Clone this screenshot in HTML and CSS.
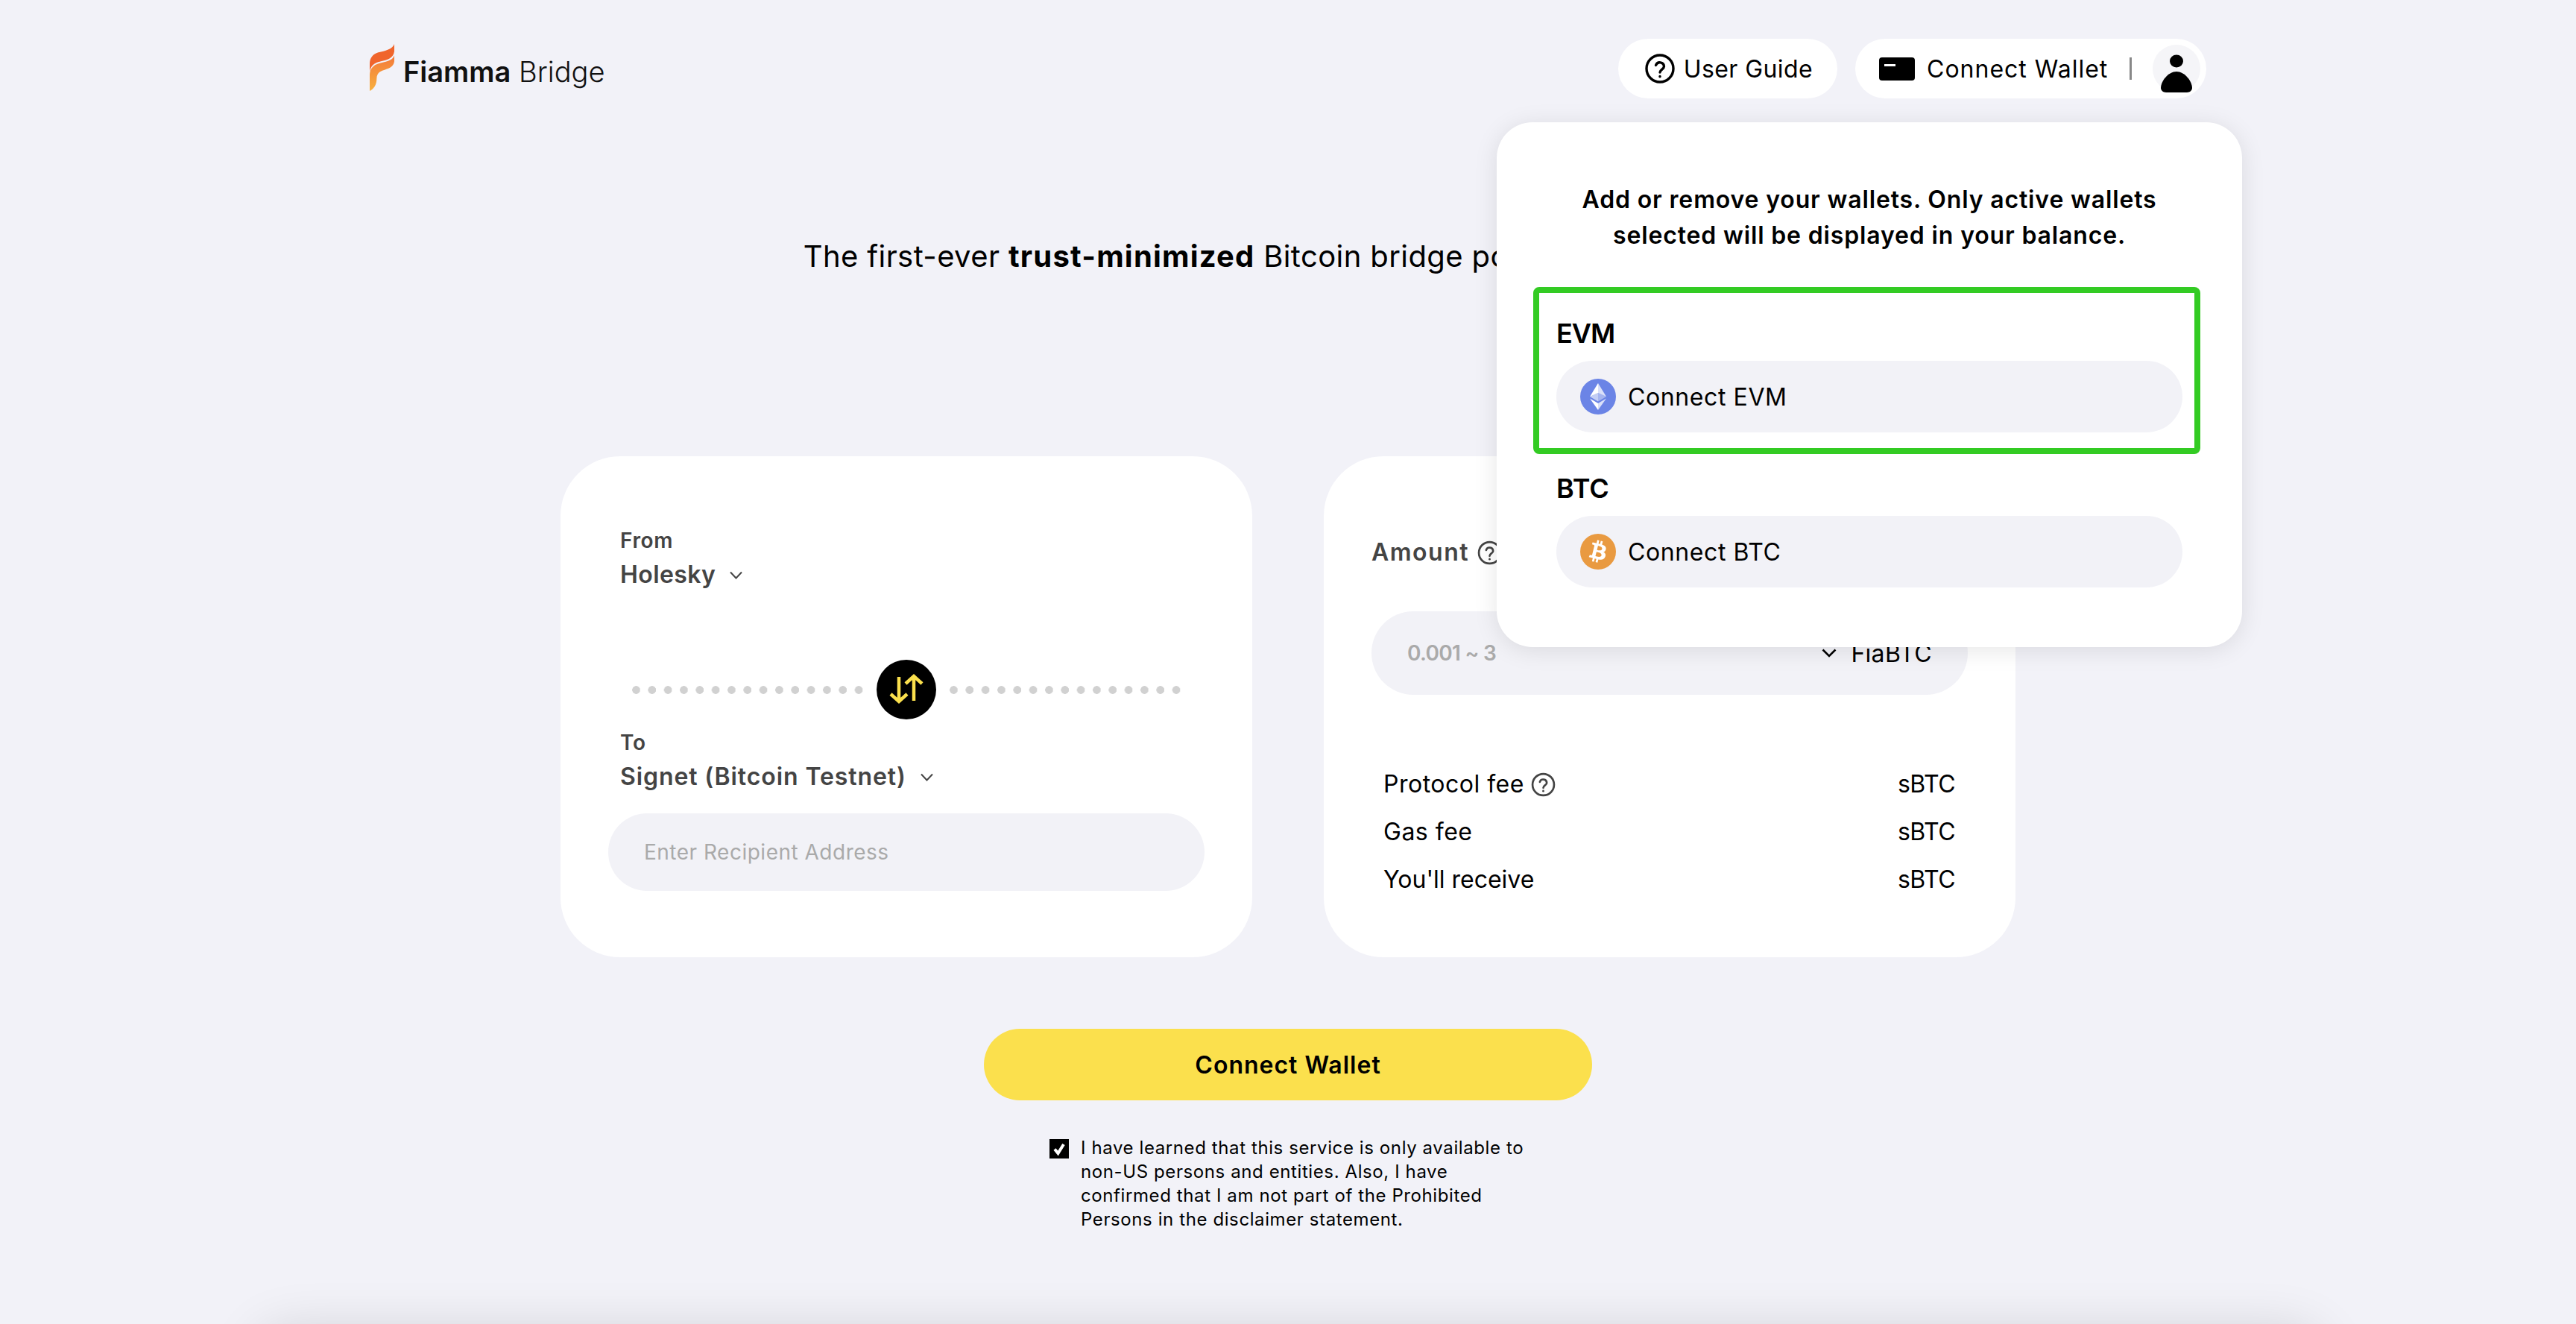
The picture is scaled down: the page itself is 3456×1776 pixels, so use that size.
FILE: index.html
```html
<!DOCTYPE html>
<html lang="en">
<head>
    <meta charset="UTF-8">
    <meta name="viewport" content="width=device-width, initial-scale=1.0">
    <title>Fiamma Bridge</title>
    <link rel="stylesheet" href="styles.css">
</head>
<body>
    <header class="top-bar">
        <a class="logo" href="#">
            <svg class="logo-flame" viewBox="0 0 99 189">
                <defs>
                    <linearGradient id="flameLow" x1="0" y1="0" x2="0" y2="1">
                        <stop offset="0" stop-color="#f3793a"/>
                        <stop offset="1" stop-color="#f8b03e"/>
                    </linearGradient>
                </defs>
                <path fill="#f0652c" d="M99 0C92 22 60 28 35 34C12 40 0 58 0 80V112C4 86 20 76 45 70C70 64 95 58 99 30Z"/>
                <path fill="url(#flameLow)" d="M99 46C92 70 60 72 38 78C15 84 0 100 0 125V189C15 182 28 165 28 140C28 118 40 110 60 104C80 98 97 90 99 70Z"/>
            </svg>
            <span class="logo-text"><b>Fiamma</b> Bridge</span>
        </a>
        <div class="top-actions">
            <a class="pill guide-pill" href="#">
                <svg class="guide-icon" viewBox="0 0 40 40" fill="none" stroke="#000" stroke-width="3.4" stroke-linecap="round">
                    <circle cx="20" cy="20" r="18"/>
                    <path d="M14.5 15.5a5.7 5.7 0 0 1 11 1.6c0 3.8-5.5 4.2-5.5 8"/>
                    <path d="M20 30.5v.2"/>
                </svg>
                User Guide
            </a>
            <div class="pill wallet-pill">
                <svg class="wallet-icon" viewBox="0 0 48 31">
                    <rect width="48" height="31" rx="4" fill="#000"/>
                    <rect x="7" y="9" width="15" height="3" fill="#fff"/>
                </svg>
                <span class="wallet-label">Connect Wallet</span>
                <span class="pill-sep"></span>
                <span class="avatar">
                    <svg viewBox="0 0 64 64" width="64" height="64" fill="#000">
                        <ellipse cx="32" cy="22" rx="9" ry="8.5"/>
                        <path d="M32 36C21 36 11 49 11 58C11 61 14 64 18 64H46C50 64 53 61 53 58C53 49 43 36 32 36Z"/>
                    </svg>
                </span>

                <div class="wallet-panel">
                    <p class="panel-intro">Add or remove your wallets. Only active wallets selected will be displayed in your balance.</p>

                    <h3 class="panel-title evm-title">EVM</h3>
                    <button class="connect-row" type="button">
                        <svg class="chain-icon" viewBox="0 0 48 48">
                            <circle cx="24" cy="24" r="24" fill="#6b84e6"/>
                            <path fill="#fff" fill-opacity=".75" d="M24 6V19L35 24Z"/>
                            <path fill="#fff" d="M24 6L13 24L24 19Z"/>
                            <path fill="#fff" fill-opacity=".75" d="M24 33V42L35 26.500Z"/>
                            <path fill="#fff" d="M24 33L13 26.500L24 42Z"/>
                            <path fill="#fff" fill-opacity=".4" d="M24 19V30.500L35 24Z"/>
                            <path fill="#fff" fill-opacity=".6" d="M13 24L24 19V30.500Z"/>
                        </svg>
                        Connect EVM
                    </button>

                    <h3 class="panel-title btc-title">BTC</h3>
                    <button class="connect-row" type="button">
                        <svg class="chain-icon" viewBox="0 0 24 24">
                            <circle cx="12" cy="12" r="12" fill="#e99a41"/>
                            <path fill="#fff" fill-rule="evenodd" d="M17.288 10.291c.24-1.59-.974-2.45-2.64-3.03l.54-2.153-1.315-.33-.525 2.107c-.345-.087-.705-.167-1.064-.25l.526-2.127-1.32-.33-.54 2.165c-.285-.067-.565-.132-.84-.2l-1.815-.45-.35 1.407s.975.225.955.236c.535.136.63.486.615.766l-1.477 5.92c-.075.166-.24.406-.614.314.015.02-.96-.24-.96-.24l-.66 1.51 1.71.426.93.242-.54 2.19 1.32.327.54-2.17c.36.1.705.19 1.05.273l-.51 2.154 1.32.33.545-2.19c2.24.427 3.93.257 4.64-1.774.57-1.637-.03-2.58-1.217-3.196.854-.193 1.5-.76 1.68-1.93h.01zM14.278 14.511c-.404 1.64-3.157.75-4.05.53l.72-2.9c.896.23 3.757.67 3.33 2.37zM14.688 10.271c-.37 1.49-2.662.735-3.405.55l.654-2.64c.744.18 3.137.524 2.75 2.084v.006z"/>
                        </svg>
                        Connect BTC
                    </button>

                    <div class="panel-highlight"></div>
                </div>
            </div>
        </div>
    </header>

    <main class="bridge">
        <h2 class="headline">The first-ever <b>trust-minimized</b> Bitcoin bridge powered by BitVM</h2>

        <div class="cards">
            <section class="card route-card">
                <div class="chain-label">From</div>
                <div class="chain-select">
                    Holesky
                    <svg class="chevron" viewBox="0 0 17 11" fill="none" stroke="#444" stroke-width="2"><path d="M1 1.500L8.500 9.500L16 1.500"/></svg>
                </div>

                <div class="swap-row">
                    <span class="dots"></span>
                    <button class="swap-btn" type="button">
                        <svg viewBox="0 0 80 80" width="80" height="80" fill="none" stroke="#fbe04d" stroke-width="4.500">
                            <path d="M30 23V55M19 46L30 56L41 46"/>
                            <path d="M50 23V55M39 32L50 22L61 32"/>
                        </svg>
                    </button>
                    <span class="dots"></span>
                </div>

                <div class="chain-label to-label">To</div>
                <div class="chain-select signet-select">
                    Signet (Bitcoin Testnet)
                    <svg class="chevron" viewBox="0 0 17 11" fill="none" stroke="#444" stroke-width="2"><path d="M1 1.500L8.500 9.500L16 1.500"/></svg>
                </div>
                <input class="address-input" type="text" placeholder="Enter Recipient Address">
            </section>

            <section class="card amount-card">
                <div class="amount-label">
                    Amount
                    <svg class="help-icon" viewBox="0 0 32 32" fill="none" stroke="#444" stroke-width="2.600" stroke-linecap="round">
                        <circle cx="16" cy="16" r="14"/>
                        <path d="M11.500 12.500a4.600 4.600 0 0 1 9 1.200c0 3-4.500 3.400-4.500 6.300"/>
                        <path d="M16 24.200v.2"/>
                    </svg>
                </div>
                <div class="amount-input">
                    <input type="text" placeholder="0.001 ~ 3">
                    <svg class="token-chevron" viewBox="0 0 20 12" fill="none" stroke="#000" stroke-width="2.600"><path d="M1.500 1.500L10 10L18.500 1.500"/></svg>
                    <span class="token-name">FiaBTC</span>
                </div>
                <div class="fee-list">
                    <div class="fee-row">
                        <span class="fee-name">Protocol fee
                            <svg class="help-icon" viewBox="0 0 32 32" fill="none" stroke="#444" stroke-width="2.600" stroke-linecap="round">
                                <circle cx="16" cy="16" r="14"/>
                                <path d="M11.500 12.500a4.600 4.600 0 0 1 9 1.200c0 3-4.500 3.400-4.500 6.300"/>
                                <path d="M16 24.200v.2"/>
                            </svg>
                        </span>
                        <span class="fee-unit">sBTC</span>
                    </div>
                    <div class="fee-row"><span class="fee-name">Gas fee</span><span class="fee-unit">sBTC</span></div>
                    <div class="fee-row"><span>You'll receive</span><span class="fee-unit">sBTC</span></div>
                </div>
            </section>
        </div>

        <button class="main-btn" type="button">Connect Wallet</button>

        <div class="terms">
            <span class="terms-check">
                <svg viewBox="0 0 26 26" width="26" height="26" fill="none" stroke="#fff" stroke-width="4"><path d="M7 13.500L11.500 19L19 7"/></svg>
            </span>
            <p>I have learned that this service is only available to non-US persons and entities. Also, I have confirmed that I am not part of the Prohibited Persons in the disclaimer statement.</p>
        </div>
    </main>

    <footer class="page-foot"></footer>
</body>
</html>
```

FILE: styles.css
```css
* {
    box-sizing: border-box;
}

body {
    margin: 0;
    height: 1776px;
    overflow: hidden;
    background-color: #f2f2f8;
    color: #000;
    font-family: Inter, "Noto Sans", Arial, sans-serif;
    font-size: 32px;
}

button,
input {
    font-family: inherit;
    border: none;
    outline: none;
}

a {
    color: inherit;
    text-decoration: none;
}

/* top bar */
.top-bar {
    display: flex;
    justify-content: space-between;
    width: 2464px;
    margin: 0 auto;
    padding-top: 52px;
}

.logo {
    display: flex;
    align-items: flex-start;
    gap: 12px;
    padding-top: 7px;
}

.logo-flame {
    width: 33px;
    height: 63px;
}

.logo-text {
    margin-top: 14px;
    font-size: 38px;
    font-weight: 300;
    line-height: 46px;
    color: #111;
}

.logo-text b {
    font-weight: 600;
}

.top-actions {
    display: flex;
    gap: 24px;
}

.pill {
    display: flex;
    align-items: center;
    height: 80px;
    background-color: #fff;
    border-radius: 40px;
}

.guide-pill {
    padding: 0 33px 0 36px;
    gap: 12px;
    letter-spacing: 0.4px;
}

.guide-icon {
    width: 40px;
    height: 40px;
}

.wallet-pill {
    position: relative;
    width: 471px;
    padding: 0 8px 0 32px;
}

.wallet-icon {
    width: 48px;
    height: 31px;
    margin-right: 16px;
}

.wallet-label {
    letter-spacing: 1px;
}

.pill-sep {
    width: 3px;
    height: 30px;
    margin: 0 28px 0 auto;
    background-color: #888;
}

.avatar {
    width: 64px;
    height: 64px;
    border-radius: 50%;
    background-color: #f5f5f8;
}

.avatar svg {
    display: block;
}

/* wallet dropdown */
.wallet-panel {
    position: absolute;
    top: 112px;
    right: -48px;
    z-index: 10;
    width: 1000px;
    padding: 80px;
    background-color: #fff;
    border-radius: 48px;
    box-shadow: 0 4px 32px rgba(0, 0, 0, 0.1);
}

.panel-intro {
    margin: 0 auto;
    width: 830px;
    font-size: 32px;
    font-weight: 600;
    line-height: 48px;
    letter-spacing: 0.85px;
    text-align: center;
}

.panel-title {
    margin: 0;
    font-size: 36px;
    font-weight: 600;
    line-height: 48px;
}

.evm-title {
    margin-top: 83px;
    letter-spacing: -1px;
}

.btc-title {
    margin-top: 51px;
}

.connect-row {
    display: flex;
    align-items: center;
    gap: 16px;
    width: 100%;
    height: 96px;
    margin-top: 13px;
    padding: 0 32px;
    background-color: #f2f2f7;
    border-radius: 48px;
    font-size: 32px;
    letter-spacing: 0.6px;
    color: #000;
    cursor: pointer;
}

.chain-icon {
    width: 48px;
    height: 48px;
}

.panel-highlight {
    position: absolute;
    top: 221px;
    left: 49px;
    width: 895px;
    height: 224px;
    border: 8px solid #33cb23;
    border-radius: 8px;
}

/* main */
.bridge {
    display: flex;
    flex-direction: column;
    align-items: center;
}

.headline {
    width: 2000px;
    margin: 182px 0 0;
    padding-right: 51px;
    font-size: 40px;
    font-weight: 400;
    line-height: 60px;
    letter-spacing: 0.4px;
    text-align: center;
}

.headline b {
    font-weight: 700;
    letter-spacing: 1.2px;
}

.cards {
    display: flex;
    gap: 96px;
    margin-top: 238px;
}

.card {
    width: 928px;
    height: 672px;
    padding: 0 64px;
    background-color: #fff;
    border-radius: 80px;
}

.route-card {
    padding-top: 95px;
}

.chain-label {
    padding-left: 16px;
    margin-bottom: 6px;
    font-size: 28px;
    font-weight: 600;
    line-height: 36px;
    letter-spacing: 0.6px;
    color: #444;
}

.to-label {
    margin-top: 13px;
    margin-bottom: 6px;
}

.chain-select {
    display: flex;
    align-items: center;
    gap: 19px;
    padding-left: 16px;
    font-size: 32px;
    font-weight: 600;
    line-height: 44px;
    letter-spacing: 0.4px;
    color: #444;
}

.signet-select {
    letter-spacing: 0.9px;
}

.chevron {
    width: 17px;
    height: 11px;
}

.swap-row {
    display: flex;
    justify-content: center;
    align-items: center;
    gap: 18px;
    margin-top: 92px;
}

.dots {
    width: 310px;
    height: 11px;
    background-image: radial-gradient(circle at 5.5px 50%, #d1d1d1 5px, transparent 5.6px);
    background-size: 21.33px 11px;
}

.swap-btn {
    width: 80px;
    height: 80px;
    padding: 0;
    background-color: #000;
    border-radius: 50%;
    cursor: pointer;
}

.swap-btn svg {
    display: block;
}

.address-input {
    display: block;
    width: 800px;
    height: 104px;
    margin-top: 27px;
    padding: 0 48px;
    background-color: #f2f2f7;
    border-radius: 52px;
    font-size: 28px;
    letter-spacing: 0.5px;
}

.address-input::placeholder,
.amount-input input::placeholder {
    color: #aaa;
    opacity: 1;
}

.amount-card {
    padding-top: 107px;
}

.amount-label {
    display: flex;
    align-items: center;
    gap: 11px;
    font-size: 32px;
    font-weight: 600;
    line-height: 44px;
    letter-spacing: 1.5px;
    color: #444;
}

.help-icon {
    width: 33px;
    height: 33px;
    vertical-align: -6px;
}

.amount-input {
    display: flex;
    align-items: center;
    height: 112px;
    margin-top: 57px;
    padding: 0 48px;
    background-color: #f2f2f7;
    border-radius: 56px;
}

.amount-input input {
    flex: 1;
    min-width: 0;
    padding: 0;
    background: transparent;
    font-size: 28px;
    font-weight: 600;
    letter-spacing: -0.7px;
}

.token-chevron {
    width: 20px;
    height: 12px;
    margin-right: 19px;
}

.token-name {
    font-size: 32px;
    letter-spacing: 0.3px;
}

.fee-list {
    display: flex;
    flex-direction: column;
    gap: 24px;
    margin-top: 100px;
    padding: 0 17px 0 16px;
}

.fee-row {
    display: flex;
    justify-content: space-between;
    line-height: 40px;
}

.fee-name {
    letter-spacing: 0.5px;
}

.fee-unit {
    letter-spacing: -0.5px;
}

.main-btn {
    width: 816px;
    height: 96px;
    margin-top: 96px;
    background-color: #fbe04d;
    border-radius: 48px;
    font-size: 32px;
    font-weight: 600;
    letter-spacing: 1px;
    color: #000;
    cursor: pointer;
}

.terms {
    display: flex;
    align-items: flex-start;
    gap: 16px;
    width: 640px;
    margin-top: 48px;
}

.terms-check {
    flex: none;
    width: 26px;
    height: 26px;
    margin-top: 4px;
    background-color: #000;
}

.terms-check svg {
    display: block;
}

.terms p {
    width: 598px;
    margin: 0;
    font-size: 24px;
    line-height: 32px;
    letter-spacing: 0.6px;
}

/* only its shadow shows at the bottom of the window */
.page-foot {
    position: fixed;
    left: 345px;
    right: 341px;
    top: 1785px;
    height: 100px;
    border-radius: 40px;
    box-shadow: 0 0 70px rgba(0, 0, 0, 0.14);
}
```
